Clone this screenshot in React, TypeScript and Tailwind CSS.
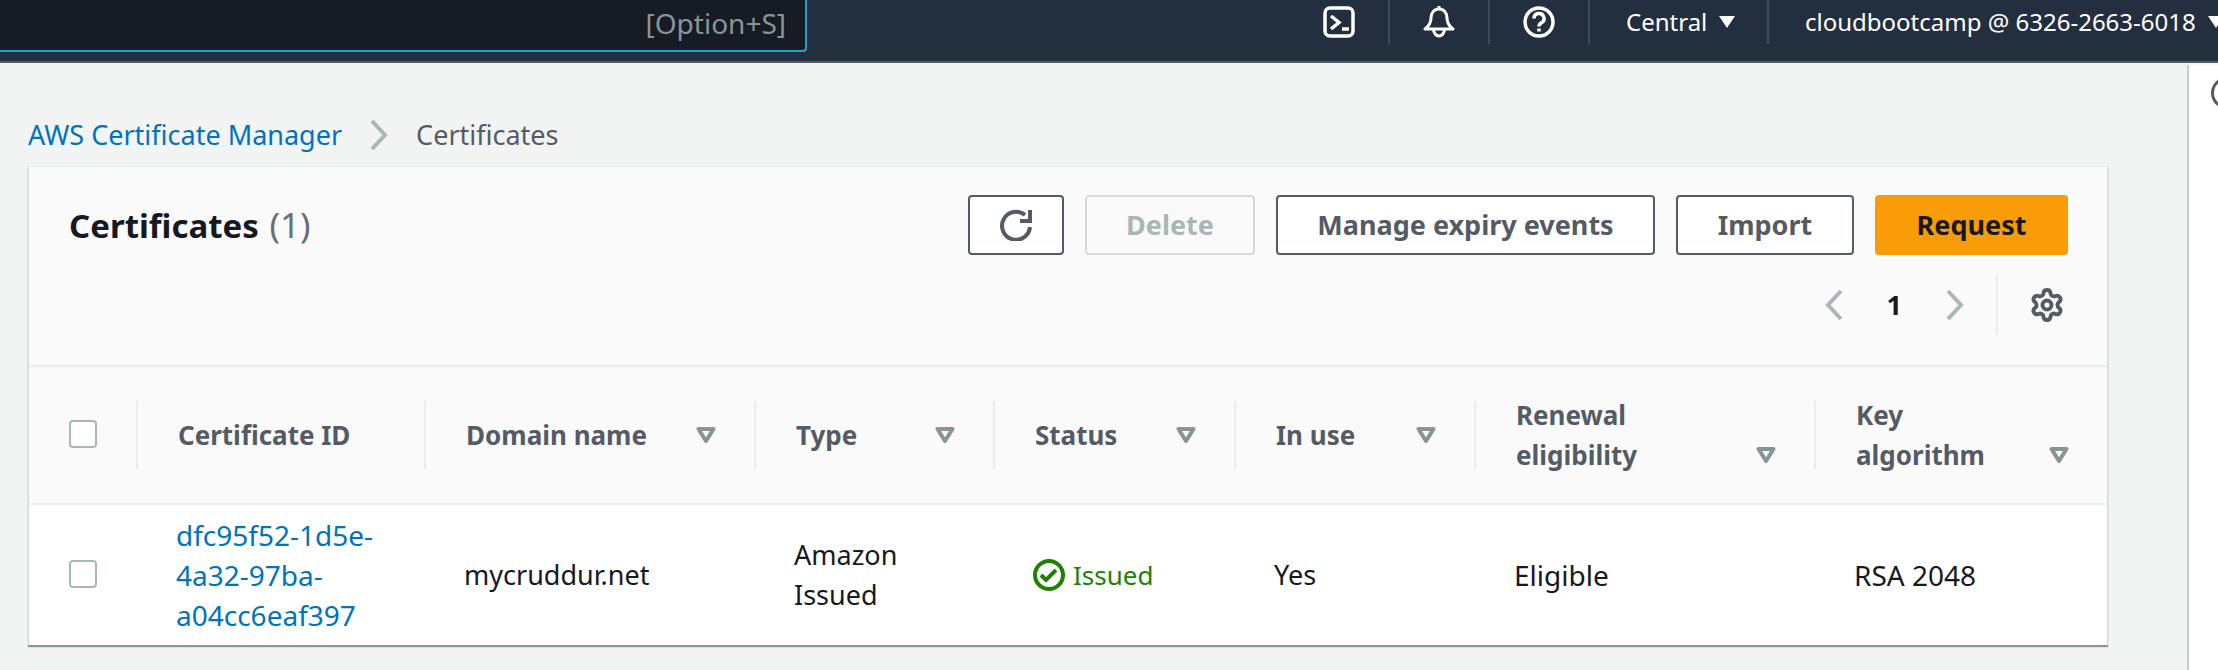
import { type FC, type ReactNode } from "react";
import { Settings } from "lucide-react";

const Caret: FC<{ className?: string }> = ({ className }) => (
  <svg viewBox="0 0 20 16" className={`h-4 w-5 shrink-0 ${className ?? ""}`}>
    <path d="M2.500 2h15L10 14z" fill="none" stroke="#879596" strokeWidth="4" strokeLinejoin="round" />
  </svg>
);

const NavTriangle: FC = () => (
  <svg viewBox="0 0 16 12" className="h-3 w-4 shrink-0">
    <path d="M0 0h16l-8 12z" fill="#fff" />
  </svg>
);

const Chevron: FC<{ left?: boolean; className?: string }> = ({ left, className }) => (
  <svg viewBox="0 0 18 32" className={`h-8 w-[18px] shrink-0 ${className ?? ""}`}>
    <path
      d={left ? "M16 2 3 16l13 14" : "M2 2l13 14L2 30"}
      fill="none"
      stroke="#aab7b8"
      strokeWidth="4"
    />
  </svg>
);

const Btn: FC<{ children: ReactNode; className: string }> = ({ children, className }) => (
  <button
    className={`flex h-[60px] items-center justify-center rounded border-2 text-[27px] font-bold ${className}`}
  >
    {children}
  </button>
);

const headers = [
  { label: "Certificate ID", caret: false },
  { label: "Domain name", caret: true },
  { label: "Type", caret: true },
  { label: "Status", caret: true },
  { label: "In use", caret: true },
  { label: "Renewal eligibility", caret: true, wrap: true },
  { label: "Key algorithm", caret: true, wrap: true },
];

const Checkbox: FC = () => (
  <div className="-mt-[3px] ml-10 h-7 w-7 rounded border-2 border-[#aab7b8] bg-white" />
);

export default function App() {
  return (
    <div
      className="flex h-[670px] w-[2218px] flex-col overflow-hidden bg-[#f2f3f3] text-[27px] leading-10 text-[#16191f]"
      style={{ fontFamily: '"Noto Sans", sans-serif' }}
    >
      <header className="flex h-[63px] shrink-0 items-start border-b-2 border-[#545b64] bg-[#232f3e] text-white">
        <div className="flex h-[52px] w-[807px] shrink-0 items-center justify-end rounded-br border-r-2 border-b-2 border-[#2a9fc5] bg-[#161b24] pr-[19px] pb-1 text-[28px] text-[#879596]">
          [Option+S]
        </div>
        <div className="flex-1" />
        <div className="flex h-11 w-[100px] items-center justify-center border-r-2 border-[#414c5a]">
          <svg viewBox="0 0 32 32" className="h-8 w-8" fill="none" stroke="#fff" strokeWidth="3.5">
            <rect x="2" y="2" width="28" height="28" rx="5" />
            <path d="M8 10l8 6.500-8 6.500" />
            <path d="M19 23h7" />
          </svg>
        </div>
        <div className="flex h-11 w-[100px] items-center justify-center border-r-2 border-[#414c5a]">
          <svg viewBox="0 0 32 32" className="h-8 w-8" fill="none" stroke="#fff" strokeWidth="3">
            <path d="M16 0v3" />
            <path d="M2 23c4-3 6-6 6-11 0-5 3-9 8-9s8 4 8 9c0 5 2 8 6 11z" strokeLinejoin="round" />
            <path d="M10.500 23a5.500 7 0 0 0 11 0" />
          </svg>
        </div>
        <div className="flex h-11 w-[100px] items-center justify-center border-r-2 border-[#414c5a]">
          <svg viewBox="0 0 32 32" className="h-8 w-8" fill="none" stroke="#fff" strokeWidth="3.5">
            <circle cx="16" cy="16" r="14" />
            <path d="M11 12.500a5 5 0 1 1 7.500 4.300c-1.500.9-2.500 1.700-2.500 3.700" />
            <path d="M16 22.500v3" />
          </svg>
        </div>
        <div className="flex h-11 w-[179px] items-center gap-3 border-r-2 border-[#414c5a] pl-9">
          <span className="text-[24px]">Central</span>
          <NavTriangle />
        </div>
        <div className="flex h-11 w-[449px] items-center gap-3 pl-9">
          <span className="text-[24px] whitespace-nowrap">cloudbootcamp @ 6326-2663-6018</span>
          <NavTriangle />
        </div>
      </header>

      <div className="flex flex-1 pt-0.5">
        <main className="flex-1 pt-[50px] pr-[79px] pl-7">
          <nav className="flex h-10 items-center">
            <span className="text-[#0073bb]">AWS Certificate Manager</span>
            <Chevron className="mr-7 ml-7" />
            <span className="text-[#545b64]">Certificates</span>
          </nav>

          <section className="mt-[11px] w-[2080px] border-r border-l border-[#d5dbdb] shadow-[0_2px_1px_#8a9499]">
            <div className="h-[201px] border-t border-b-2 border-[#eaeded] bg-[#fafafa] pt-7 pr-[39px] pl-10">
              <div className="flex items-center justify-between">
                <h1 className="text-[33px] font-bold">
                  Certificates <span className="ml-0.5 text-[35px] font-normal text-[#687078]">(1)</span>
                </h1>
                <div className="flex gap-[21px]">
                  <Btn className="w-[96px] border-[#545b64] bg-white">
                    <svg viewBox="0 0 32 32" className="h-8 w-8" fill="none" stroke="#545b64" strokeWidth="4">
                      <path d="M30 18A14 14 0 1 1 25 6" />
                      <path d="M30 1v11H20" />
                    </svg>
                  </Btn>
                  <Btn className="w-[170px] border-[#d5dbdb] text-[#aab7b8]">Delete</Btn>
                  <Btn className="w-[379px] border-[#545b64] bg-white text-[#545b64]">Manage expiry events</Btn>
                  <Btn className="w-[178px] border-[#545b64] bg-white text-[#545b64]">Import</Btn>
                  <Btn className="w-[193px] border-none bg-[#f89c07] text-[#16191f]">Request</Btn>
                </div>
              </div>
              <div className="mt-5 mr-[3px] flex h-[60px] items-center justify-end">
                <Chevron left />
                <span className="mx-11 font-bold">1</span>
                <Chevron />
                <div className="mr-[31px] ml-8 h-[60px] border-l-2 border-[#eaeded]" />
                <Settings size={36} color="#545b64" strokeWidth={2.6} />
              </div>
            </div>

            <div className="grid h-[138px] grid-cols-[107px_288px_330px_239px_241px_240px_340px_293px] items-center border-b-2 border-[#eaeded] bg-[#fafafa] text-[26px]">
              <Checkbox />
              {headers.map((h) => (
                <div
                  key={h.label}
                  className="flex h-[68px] items-center justify-between border-l-2 border-[#eaeded] pr-[38px] pl-10 font-bold text-[#545b64]"
                >
                  <span className={h.wrap ? "w-[170px]" : "whitespace-nowrap"}>{h.label}</span>
                  {h.caret && <Caret className={h.wrap ? "mt-10" : ""} />}
                </div>
              ))}
            </div>

            <div className="grid h-[140px] grid-cols-[107px_288px_330px_239px_241px_240px_340px_293px] items-center bg-white">
              <Checkbox />
              <a className="box-content w-[215px] pl-10 text-[28px] text-[#0073bb]">
                dfc95f52-1d5e-4a32-97ba-a04cc6eaf397
              </a>
              <div className="pl-10">mycruddur.net</div>
              <div className="box-content w-[140px] pl-10">Amazon Issued</div>
              <div className="flex items-center gap-2 pl-10 text-[26px] text-[#1d8102]">
                <svg viewBox="0 0 32 32" className="h-8 w-8 shrink-0" fill="none" stroke="#1d8102" strokeWidth="4">
                  <circle cx="16" cy="16" r="14" />
                  <path d="M8 16l5 5 10-10" />
                </svg>
                Issued
              </div>
              <div className="pl-10">Yes</div>
              <div className="pl-10 text-[28px]">Eligible</div>
              <div className="pl-10 text-[28px]">RSA 2048</div>
            </div>
          </section>
        </main>

        <aside className="w-[31px] shrink-0 border-l-2 border-[#c6cccc] bg-white pt-3 pl-[22px]">
          <div className="h-8 w-8 rounded-full border-[3px] border-[#545b64]" />
        </aside>
      </div>
    </div>
  );
}
